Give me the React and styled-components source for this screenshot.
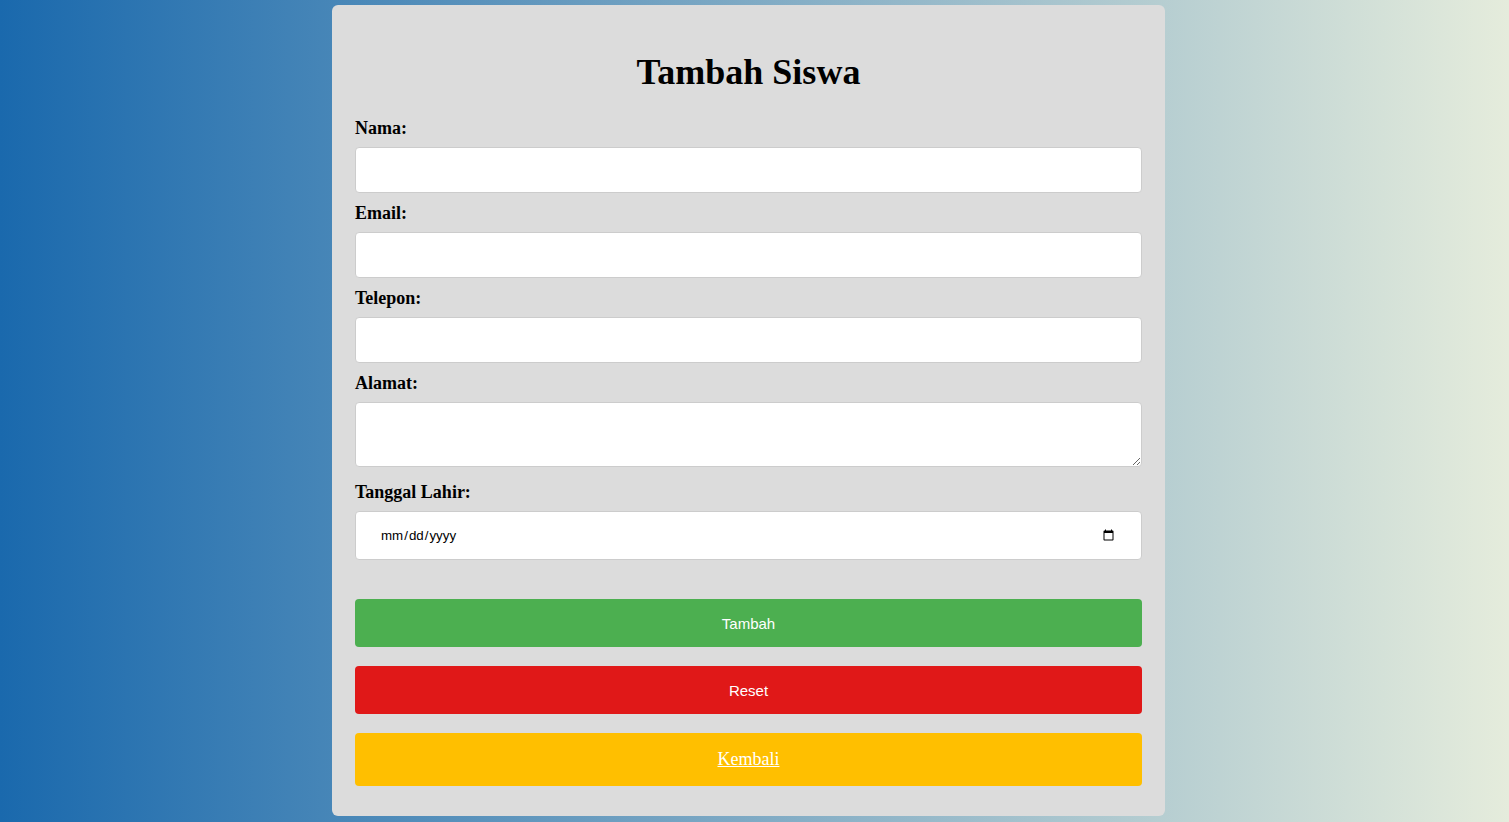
import React from "react";
import styled, { createGlobalStyle } from "styled-components";

const GlobalStyle = createGlobalStyle`
  html, body {
    margin: 0;
    padding: 0;
  }
  body {
    min-height: 100vh;
    background: linear-gradient(to right, #1a69ad, #e5ecdc);
    font-family: "Liberation Serif", "Times New Roman", serif;
  }
  * {
    box-sizing: border-box;
  }
`;

const Page = styled.div`
  min-height: 822px;
  padding: 5px 12px 0 0;
`;

const Card = styled.div`
  width: 833px;
  margin: 0 auto;
  background: #dcdcdc;
  border-radius: 6px;
  padding: 20px 23px 30px;
`;

const Title = styled.h2`
  margin: 27px 0 25px;
  font-size: 36px;
  line-height: 41px;
  font-weight: bold;
  text-align: center;
  color: #000;
`;

const Form = styled.form`
  display: flex;
  flex-direction: column;
`;

const Label = styled.label`
  display: block;
  font-size: 18px;
  font-weight: bold;
  line-height: 20px;
  margin-bottom: 9px;
  color: #000;
`;

const fieldBase = `
  display: block;
  width: 100%;
  background: #fff;
  border: 1px solid #cccccc;
  border-radius: 4px;
  font-family: "Liberation Sans", Arial, sans-serif;
  font-size: 14px;
  color: #000;
`;

const Input = styled.input`
  ${fieldBase}
  height: ${(p) => p.$h || 46}px;
  padding: 0 12px;
  margin-bottom: ${(p) => p.$mb ?? 10}px;

  &[type="date"] {
    padding: 0 24px;
    font-size: 13.33px;
  }
`;

const TextArea = styled.textarea`
  ${fieldBase}
  height: 65px;
  padding: 12px;
  margin-bottom: 15px;
  resize: vertical;
`;

const Button = styled.button`
  display: flex;
  align-items: center;
  justify-content: center;
  width: 100%;
  height: 48px;
  border: none;
  border-radius: 4px;
  background: ${(p) => p.$bg};
  color: #fff;
  font-family: "Liberation Sans", Arial, sans-serif;
  font-size: 15px;
  margin-bottom: 19px;
  cursor: pointer;
`;

const BackLink = styled.a`
  display: flex;
  align-items: center;
  justify-content: center;
  height: 53px;
  border-radius: 4px;
  background: #ffbf00;
  color: #fff;
  font-size: 18px;
  text-decoration: underline;
`;

export default function App() {
  return (
    <>
      <GlobalStyle />
      <Page>
        <Card>
          <Title>Tambah Siswa</Title>
          <Form onSubmit={(e) => e.preventDefault()}>
            <Label htmlFor="nama">Nama:</Label>
            <Input id="nama" type="text" />
            <Label htmlFor="email">Email:</Label>
            <Input id="email" type="email" />
            <Label htmlFor="telepon">Telepon:</Label>
            <Input id="telepon" type="text" />
            <Label htmlFor="alamat">Alamat:</Label>
            <TextArea id="alamat" />
            <Label htmlFor="tgl">Tanggal Lahir:</Label>
            <Input id="tgl" type="date" $h={49} $mb={39} />
            <Button type="submit" $bg="#4caf50">Tambah</Button>
            <Button type="reset" $bg="#e01818">Reset</Button>
            <BackLink href="#">Kembali</BackLink>
          </Form>
        </Card>
      </Page>
    </>
  );
}
